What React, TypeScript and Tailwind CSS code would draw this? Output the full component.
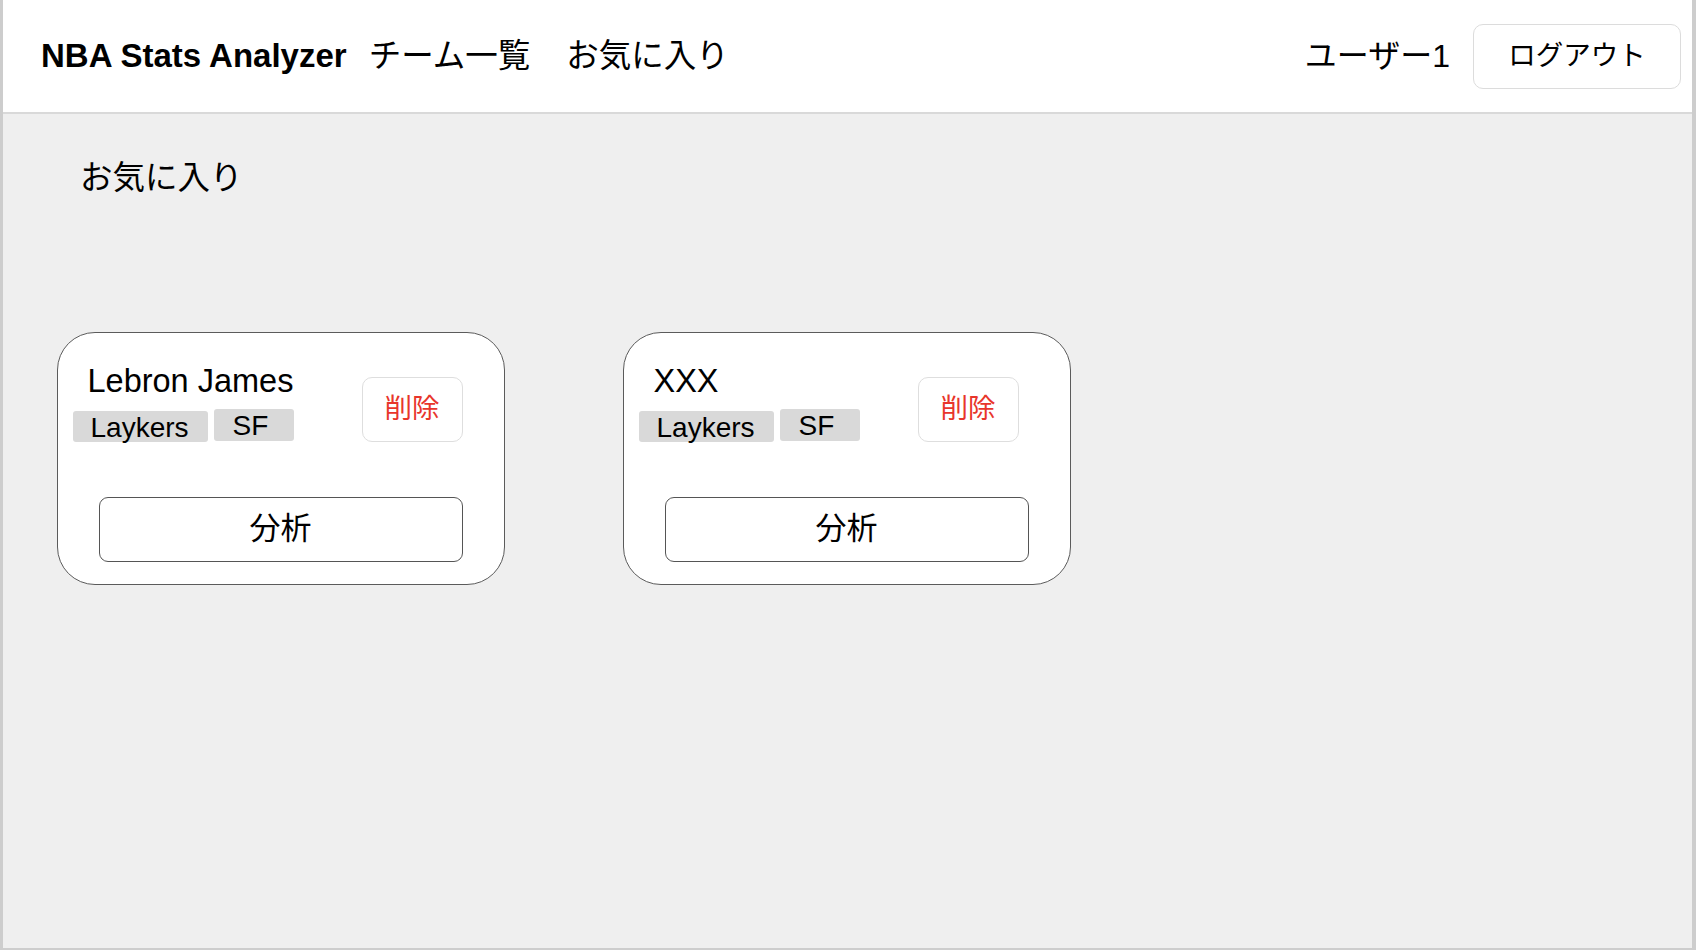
import React from "react";

const F = { fontFamily: '"Liberation Sans", "Noto Sans CJK JP", sans-serif' };

function Card({ name, delMl }: { name: string; delMl: string }) {
  return (
    <div className="w-[448px] h-[253px] shrink-0 rounded-[38px] border-[1.5px] border-[#5b5b5b] bg-white flex flex-col">
      <div className="flex items-start">
        <div className="pt-[30px] pl-[14.5px] flex flex-col">
          <div className="ml-[15px] text-[32.5px] leading-[36px] text-black whitespace-nowrap">{name}</div>
          <div className="mt-[10px] flex items-start gap-[6px]">
            <div className="mt-[2px] w-[135px] h-[31px] rounded-[3px] bg-[#d9d9d9] pl-[18px] text-[28px] leading-[34px] text-black">
              Laykers
            </div>
            <div className="w-[80px] h-[32px] rounded-[3px] bg-[#d9d9d9] pl-[19px] text-[28px] leading-[33px] text-black">
              SF
            </div>
          </div>
        </div>
        <button
          className={`mt-[43.5px] ${delMl} w-[101px] h-[65px] rounded-[10px] border-[1.5px] border-[#dedede] bg-white text-[27.5px] text-[#e8352b] flex items-center justify-center`}
          style={F}
        >
          削除
        </button>
      </div>
      <button
        className="mt-[54.5px] ml-[40.5px] w-[364px] h-[65px] rounded-[9px] border-[1.5px] border-[#555555] bg-white text-[31px] text-black flex items-center justify-center"
        style={F}
      >
        分析
      </button>
    </div>
  );
}

export default function App() {
  return (
    <div
      className="w-[1696px] h-[950px] bg-[#efefef] border-l-[3px] border-r-[4px] border-b-2 border-[#cdcdcd] flex flex-col overflow-hidden"
      style={F}
    >
      <header className="h-[114px] shrink-0 bg-white border-b-2 border-[#d9d9d9] flex items-center pl-[38px] pr-[11px]">
        <div className="text-[33px] font-bold text-black whitespace-nowrap">NBA Stats Analyzer</div>
        <div className="ml-[22px] text-[32.5px] text-black whitespace-nowrap">チーム一覧</div>
        <div className="ml-[36px] text-[32.5px] text-black whitespace-nowrap">お気に入り</div>
        <div className="ml-auto text-[32px] text-black whitespace-nowrap">ユーザー1</div>
        <button className="ml-[23px] w-[208px] h-[65px] rounded-[10px] border-[1.5px] border-[#dcdcdc] bg-white text-[27.5px] text-black flex items-center justify-center">
          ログアウト
        </button>
      </header>
      <main className="flex-1 pl-[54px]">
        <h1 className="mt-[44px] ml-[23px] text-[32.5px] leading-[40px] font-normal text-black">お気に入り</h1>
        <div className="mt-[134px] flex gap-[118px]">
          <Card name="Lebron James" delMl="ml-[68px]" />
          <Card name="XXX" delMl="ml-[58px]" />
        </div>
      </main>
    </div>
  );
}
